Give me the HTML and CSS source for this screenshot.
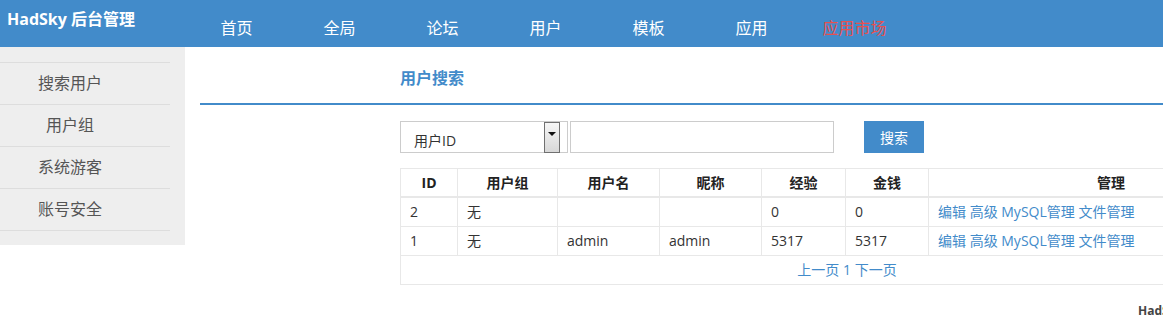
FILE: index.html
```html
<!DOCTYPE html>
<html lang="zh-CN">
<head>
    <meta charset="UTF-8">
    <title>HadSky 后台管理 - 用户搜索</title>
    <link rel="stylesheet" href="styles.css">
</head>
<body>
    <div class="header">
        <div class="logo">HadSky 后台管理</div>
        <ul class="nav">
            <li><a href="#">首页</a></li>
            <li><a href="#">全局</a></li>
            <li><a href="#">论坛</a></li>
            <li><a href="#">用户</a></li>
            <li><a href="#">模板</a></li>
            <li><a href="#">应用</a></li>
            <li><a href="#" class="market">应用市场</a></li>
        </ul>
    </div>

    <div class="wrap">
        <div class="sidebar">
            <ul class="side-menu">
                <li><a href="#">搜索用户</a></li>
                <li><a href="#">用户组</a></li>
                <li><a href="#">系统游客</a></li>
                <li><a href="#">账号安全</a></li>
            </ul>
        </div>

        <div class="main">
            <div class="page-title">用户搜索</div>

            <div class="content">
                <form class="search-form">
                    <div class="select">
                        <span class="select-text">用户ID</span>
                        <span class="select-arrow"></span>
                    </div>
                    <input type="text" class="search-input">
                    <button type="button" class="search-button">搜索</button>
                </form>

                <table class="user-table">
                    <thead>
                        <tr>
                            <th class="col-id">ID</th>
                            <th class="col-group">用户组</th>
                            <th class="col-name">用户名</th>
                            <th class="col-nick">昵称</th>
                            <th class="col-exp">经验</th>
                            <th class="col-money">金钱</th>
                            <th class="col-manage">管理</th>
                        </tr>
                    </thead>
                    <tbody>
                        <tr>
                            <td>2</td>
                            <td>无</td>
                            <td></td>
                            <td></td>
                            <td>0</td>
                            <td>0</td>
                            <td><a href="#">编辑</a> <a href="#">高级</a> <a href="#">MySQL管理</a> <a href="#">文件管理</a></td>
                        </tr>
                        <tr>
                            <td>1</td>
                            <td>无</td>
                            <td>admin</td>
                            <td>admin</td>
                            <td>5317</td>
                            <td>5317</td>
                            <td><a href="#">编辑</a> <a href="#">高级</a> <a href="#">MySQL管理</a> <a href="#">文件管理</a></td>
                        </tr>
                        <tr>
                            <td colspan="7" class="pager"><a href="#">上一页</a> <a href="#">1</a> <a href="#">下一页</a></td>
                        </tr>
                    </tbody>
                </table>
            </div>

            <div class="footer">HadSky</div>
        </div>
    </div>
</body>
</html>
```

FILE: styles.css
```css
html, body {
    overflow: hidden;
}
body {
    margin: 0;
    font-family: "Open Sans", "Noto Sans CJK SC", sans-serif;
    font-size: 14px;
    color: #333;
    background: #fff;
}
a {
    text-decoration: none;
}
ul {
    list-style: none;
    margin: 0;
    padding: 0;
}
.header {
    display: flex;
    height: 47px;
    background-color: #428bca;
}
.logo {
    width: 178px;
    padding-left: 7px;
    padding-top: 8px;
    line-height: 22px;
    font-size: 16px;
    font-weight: bold;
    color: #fff;
}
.nav {
    display: flex;
}
.nav li {
    width: 103px;
    text-align: center;
    padding-top: 16px;
    line-height: 24px;
}
.nav a {
    font-size: 16px;
    color: #fff;
}
.nav a.market {
    color: #e8504f;
}
.wrap {
    display: flex;
    align-items: flex-start;
}
.sidebar {
    flex: none;
    width: 185px;
    height: 183px;
    padding-top: 15px;
    background-color: #eee;
}
.side-menu {
    width: 170px;
    border-top: 1px solid #ddd;
}
.side-menu li {
    height: 41px;
    line-height: 41px;
    padding-right: 30px;
    text-align: center;
    border-bottom: 1px solid #ddd;
}
.side-menu a {
    font-size: 16px;
    color: #555;
}
.main {
    flex: none;
    width: 1100px;
    margin-left: 15px;
}
.page-title {
    padding: 20px 0 14px 200px;
    line-height: 22px;
    font-size: 16px;
    font-weight: bold;
    color: #428bca;
    border-bottom: 2px solid #428bca;
}
.content {
    padding: 16px 0 0 200px;
}
.search-form {
    display: flex;
    align-items: center;
    margin: 0;
}
.select {
    display: flex;
    align-items: center;
    width: 166px;
    height: 30px;
    border: 1px solid #ccc;
}
.select-text {
    flex: 1;
    padding: 8px 0 0 13px;
    font-size: 14px;
    line-height: 20px;
}
.select-arrow {
    display: flex;
    align-items: center;
    justify-content: center;
    width: 14px;
    height: 29px;
    margin-right: 7px;
    border: 1px solid #707070;
    background: linear-gradient(#f6f6f6, #d8d8d8);
}
.select-arrow::after {
    content: "";
    border-left: 4px solid transparent;
    border-right: 4px solid transparent;
    border-top: 4px solid #111;
    margin-top: -6px;
}
.search-input {
    width: 264px;
    height: 32px;
    padding: 0 6px;
    margin: 0 0 0 2px;
    box-sizing: border-box;
    border: 1px solid #ccc;
    outline: none;
}
.search-button {
    width: 60px;
    height: 32px;
    margin-left: 30px;
    border: none;
    background-color: #428bca;
    color: #fff;
    font-family: inherit;
    font-size: 14px;
    cursor: pointer;
}
.user-table {
    width: 894px;
    margin-top: 15px;
    border-collapse: collapse;
    table-layout: fixed;
}
.user-table th,
.user-table td {
    border: 1px solid #e8e8e8;
    height: 28px;
    padding: 0 9px;
    line-height: 20px;
    text-align: left;
    white-space: nowrap;
}
.user-table th {
    text-align: center;
    font-weight: bold;
    color: #222;
    border-bottom-width: 2px;
    height: 27px;
}
.user-table td a {
    color: #428bca;
}
.user-table td.pager {
    text-align: center;
}
.col-id { width: 38px; }
.col-group { width: 81px; }
.col-name { width: 83px; }
.col-nick { width: 83px; }
.col-exp { width: 65px; }
.col-money { width: 64px; }
.footer {
    padding: 17px 0 0 938px;
    font-size: 12px;
    font-weight: bold;
    color: #444;
}
```
